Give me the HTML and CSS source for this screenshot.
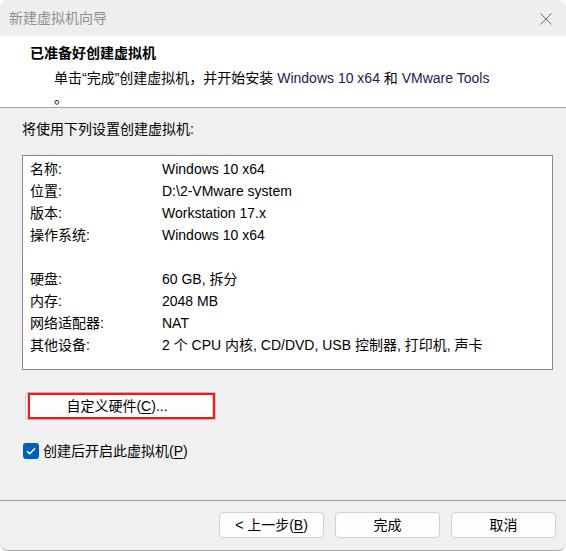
FILE: index.html
```html
<!DOCTYPE html>
<html lang="zh-CN">
<head>
<meta charset="utf-8">
<title>新建虚拟机向导</title>
<link rel="stylesheet" href="styles.css">
</head>
<body>
<div class="window">
  <div class="titlebar">
    <span class="title-text">新建虚拟机向导</span>
    <svg class="close" width="12" height="12" viewBox="0 0 12 12"><path d="M0.5 0.5 L11.5 11.5 M11.5 0.5 L0.5 11.5" stroke="#6e6e6e" stroke-width="1" fill="none"/></svg>
  </div>
  <div class="header">
    <div class="header-title">已准备好创建虚拟机</div>
    <div class="header-sub">单击“完成”创建虚拟机，并开始安装 <span class="hl">Windows 10 x64</span> 和 <span class="hl">VMware Tools</span><br>。</div>
  </div>
  <div class="content">
    <div class="intro">将使用下列设置创建虚拟机:</div>
    <div class="summary">
      <div class="row"><span class="lbl">名称:</span><span class="val">Windows 10 x64</span></div>
      <div class="row"><span class="lbl">位置:</span><span class="val">D:\2-VMware system</span></div>
      <div class="row"><span class="lbl">版本:</span><span class="val">Workstation 17.x</span></div>
      <div class="row"><span class="lbl">操作系统:</span><span class="val">Windows 10 x64</span></div>
      <div class="row"><span class="lbl">&nbsp;</span><span class="val"></span></div>
      <div class="row"><span class="lbl">硬盘:</span><span class="val">60 GB, 拆分</span></div>
      <div class="row"><span class="lbl">内存:</span><span class="val">2048 MB</span></div>
      <div class="row"><span class="lbl">网络适配器:</span><span class="val">NAT</span></div>
      <div class="row"><span class="lbl">其他设备:</span><span class="val">2 个 CPU 内核, CD/DVD, USB 控制器, 打印机, 声卡</span></div>
    </div>
    <div class="custom-wrap">
      <button class="btn custom">自定义硬件(<u>C</u>)...</button>
      <span class="highlight-box"></span>
    </div>
    <label class="check-row">
      <span class="checkbox"><svg width="10" height="8" viewBox="0 0 10 8"><path d="M1 4.2 L3.7 6.8 L9 1.2" stroke="#fff" stroke-width="1.4" fill="none"/></svg></span>
      <span>创建后开启此虚拟机(<u>P</u>)</span>
    </label>
  </div>
  <div class="footer">
    <button class="btn fbtn">&lt; 上一步(<u>B</u>)</button>
    <button class="btn fbtn">完成</button>
    <button class="btn fbtn">取消</button>
  </div>
</div>
</body>
</html>
```

FILE: styles.css
```css
html, body {
  margin: 0;
  padding: 0;
  background: #ffffff;
}
body {
  font-family: "Liberation Sans", "Noto Sans CJK SC", sans-serif;
  font-size: 14px;
  color: #000;
}
.window {
  width: 566px;
  height: 550px;
  background: #f0f0f0;
  border-bottom: 1px solid #a6a6a6;
  border-radius: 8px 8px 8px 8px;
  display: flex;
  flex-direction: column;
  overflow: hidden;
}
.titlebar {
  height: 36px;
  flex: none;
  display: flex;
  align-items: center;
  justify-content: space-between;
  padding: 0 14px 0 9px;
  background: #eeeeee;
}
.title-text {
  color: #8f8f8f;
  line-height: 20px;
  margin-top: -1px;
}
.close {
  display: block;
  margin-top: 1px;
}
.header {
  flex: none;
  height: 72px;
  box-sizing: border-box;
  background: #ffffff;
  border-bottom: 1px solid #a0a0a0;
  padding: 7px 0 0 30px;
}
.header-title {
  font-weight: bold;
  line-height: 20px;
  margin-bottom: 5px;
}
.header-sub {
  line-height: 20px;
  padding-left: 24px;
}
.hl {
  color: #1a1a5a;
}
.content {
  flex: 1;
  padding: 11px 13px 0 22px;
}
.intro {
  line-height: 20px;
}
.summary {
  margin-top: 16px;
  background: #ffffff;
  border: 1px solid #838790;
  padding: 2px 7px 13px 7px;
}
.row {
  display: flex;
  line-height: 22px;
  height: 22px;
}
.lbl {
  width: 132px;
  flex: none;
}
.custom-wrap {
  position: relative;
  margin-top: 22px;
  margin-left: 3px;
  width: 190px;
  height: 28px;
}
.btn {
  font-family: "Liberation Sans", "Noto Sans CJK SC", sans-serif;
  font-size: 14px;
  color: #000;
  background: #fdfdfd;
  border: 1px solid #d0d0d0;
  border-radius: 4px;
  padding: 0;
  margin: 0;
}
.custom {
  width: 188px;
  height: 28px;
  line-height: 26px;
  padding-right: 4px;
}
.highlight-box {
  position: absolute;
  left: 3px;
  top: 1px;
  width: 187px;
  height: 26px;
  box-sizing: border-box;
  border: 2px solid #ee1c1c;
  box-shadow: 0 0 0 1px rgba(238, 28, 28, 0.25);
}
.check-row {
  display: flex;
  align-items: center;
  gap: 4px;
  margin-top: 21px;
  margin-left: 1px;
  line-height: 20px;
}
.checkbox {
  width: 16px;
  height: 16px;
  border-radius: 3px;
  background: #005fb8;
  display: flex;
  align-items: center;
  justify-content: center;
}
.footer {
  flex: none;
  height: 50px;
  box-sizing: border-box;
  border-top: 1px solid #a0a0a0;
  display: flex;
  justify-content: flex-end;
  gap: 11px;
  padding: 11px 10px 0 0;
}
.fbtn {
  width: 105px;
  height: 26px;
  line-height: 24px;
}
u {
  text-underline-offset: 2px;
}
```
